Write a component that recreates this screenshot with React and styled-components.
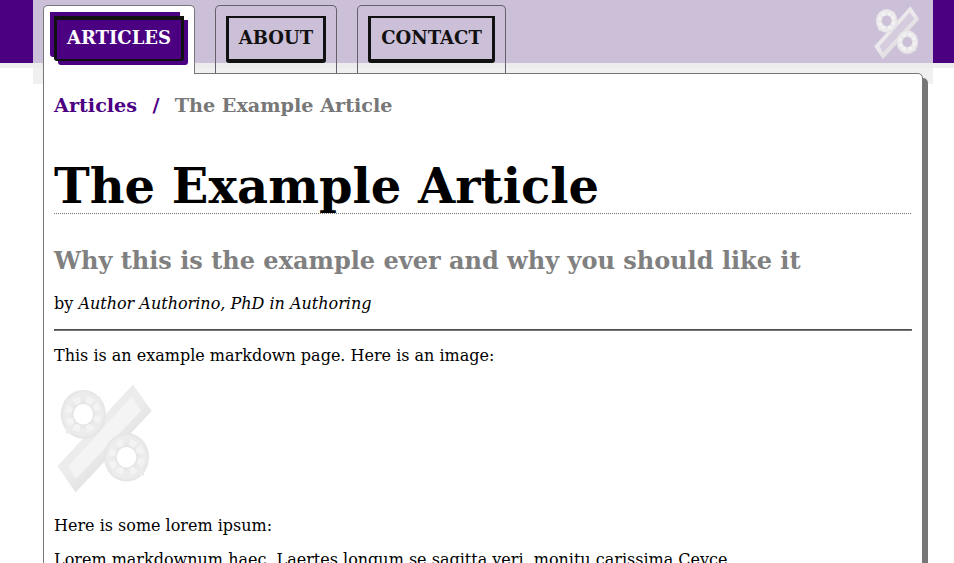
import React from "react";
import styled, { createGlobalStyle } from "styled-components";

const GlobalStyle = createGlobalStyle`
  *, *::before, *::after { box-sizing: border-box; }
  html, body { margin: 0; }
  body {
    height: 100vh;
    overflow: hidden;
    background: #fff;
    color: #000;
    font: 16px/19px "DejaVu Serif", serif;
  }
`;

const Page = styled.div`
  height: 563px;
  overflow: hidden;
  background: linear-gradient(#4b0082 0 63px, #eee 63px 68px, #fff 68px);
`;

const Column = styled.div`
  width: 900px;
  margin: 0 21px 0 33px;
  padding: 5px 10px 0;
  background: linear-gradient(#ccbfd8 0 63px, #ececec 63px 68px, #f0f0f0 68px 84px, transparent 84px);
`;

const Header = styled.header`
  display: flex;
  justify-content: space-between;
  align-items: flex-start;
  height: 68px;
`;

const Tabs = styled.nav`
  display: flex;
  gap: 20px;
`;

const Tab = styled.div`
  position: relative;
  height: ${(p) => (p.$active ? 69 : 68)}px;
  padding: 10px 10px 0;
  border: 1px solid ${(p) => (p.$active ? "#777" : "#665f6c")};
  border-bottom: 0;
  border-radius: 5px 5px 0 0;
  background: ${(p) => (p.$active ? "#fff" : "transparent")};
`;

const TabLink = styled.a`
  display: block;
  width: ${(p) => p.$width}px;
  height: ${(p) => (p.$active ? 45 : 47)}px;
  padding-top: ${(p) => (p.$active ? 7 : 9)}px;
  border: 3px solid #111;
  border-width: ${(p) => (p.$active ? "4px 3px 2px" : "2px 3px 4px")};
  border-radius: 0 0 3px 3px;
  background: ${(p) => (p.$active ? "#4b0082" : "transparent")};
  box-shadow: ${(p) => (p.$active ? "4px 4px #4b0082, -4px -4px #4b0082" : "none")};
  color: ${(p) => (p.$active ? "#fff" : "#111")};
  font-size: 18px;
  font-weight: bold;
  line-height: 21px;
  text-align: center;
  white-space: nowrap;
`;

const Card = styled.main`
  height: 520px;
  padding: 21px 10px 0;
  border: 1px solid #777;
  border-radius: 0 5px 0 0;
  background: #fff;
  box-shadow: 5px 5px #777;
`;

const Crumbs = styled.div`
  display: flex;
  gap: 15.25px;
  height: 22px;
  color: #4b0082;
  font-size: 19.2px;
  font-weight: bold;
  line-height: 22px;
`;

const Current = styled.span`
  color: #777;
`;

const Title = styled.h1`
  height: 57px;
  margin: 40px 1px 0 0;
  border-bottom: 1px dotted #777;
  font-size: 48px;
  line-height: 58px;
`;

const Subtitle = styled.h2`
  margin: 33px 0 0;
  color: #808080;
  font-size: 24px;
  line-height: 28px;
`;

const Paragraph = styled.p`
  margin: ${(p) => p.$gap ?? 15}px 0 0;
`;

const Rule = styled.hr`
  height: 2px;
  margin: 16px 0 0;
  border: 1px solid;
  border-color: #4d4d4d #777 #777 #4d4d4d;
`;

const Mark = styled.svg`
  display: block;
  flex: none;
  width: ${(p) => p.$w}px;
  height: ${(p) => p.$h}px;
  margin: ${(p) => p.$margin};
`;

const palettes = {
  header: { edge: "#e0dde2", rim: "#ebe9ec", shine: "#f4f3f4", face: "#d6ccde" },
  article: { edge: "#e4e4e4", rim: "#ececec", shine: "#f3f3f3", face: "#f4f4f4" },
};

const rings = [
  { x: 26.3, y: 30.3 },
  { x: 69.5, y: 73.2 },
];

const glints = [-28, 18, 65, 115, 152, 198, 245, 295];

function Percent({ id, w, h, margin }) {
  const { edge, rim, shine, face } = palettes[id];
  return (
    <Mark $w={w} $h={h} $margin={margin} viewBox="0 0 96 110" preserveAspectRatio="none">
      <defs>
        <linearGradient id={`${id}-bar`} gradientUnits="userSpaceOnUse" x1="33" y1="36" x2="63" y2="66">
          <stop offset="0" stopColor={rim} />
          <stop offset="0.5" stopColor={rim} />
          <stop offset="1" stopColor={edge} />
        </linearGradient>
        <radialGradient id={`${id}-ring`} cx="0.5" cy="0.5" r="0.5">
          <stop offset="0.42" stopColor={edge} />
          <stop offset="0.62" stopColor={rim} />
          <stop offset="0.85" stopColor={rim} />
          <stop offset="1" stopColor={edge} />
        </radialGradient>
        <filter id={`${id}-soft`} x="-20%" y="-20%" width="140%" height="140%">
          <feGaussianBlur stdDeviation="0.7" />
        </filter>
        <mask id={`${id}-holes`}>
          <rect width="96" height="110" fill="#fff" />
          {rings.map(({ x, y }) => (
            <ellipse key={x} cx={x} cy={y} rx="9.8" ry="10.2" fill="#000" />
          ))}
        </mask>
      </defs>
      <g mask={`url(#${id}-holes)`}>
        <path d="M76 .5 94.7 27 18.5 108.5.5 82Z" fill={`url(#${id}-bar)`} />
        <path d="M74.7 12.7 84 26.7 18.7 95 11.3 82Z" fill={face} filter={`url(#${id}-soft)`} />
        {rings.map(({ x, y }) => (
          <g key={x}>
            <ellipse cx={x} cy={y} rx="22.5" ry="24.4" fill={`url(#${id}-ring)`} />
            <g fill={shine} filter={`url(#${id}-soft)`}>
              {glints.map((a) => (
                <path key={a} transform={`translate(${x} ${y}) rotate(${a})`} d="M11.5 -2.5 18 -4 18 4 11.5 2.5Z" />
              ))}
            </g>
          </g>
        ))}
        <path d="M37 10 43.8 13 42 18ZM9 42 8.6 49 16 51ZM81 91 87.4 92 86.5 86Z" fill={rim} />
      </g>
    </Mark>
  );
}

const tabs = [
  { label: "ARTICLES", width: 130, active: true },
  { label: "ABOUT", width: 100 },
  { label: "CONTACT", width: 127 },
];

export default function App() {
  return (
    <>
      <GlobalStyle />
      <Page>
        <Column>
          <Header>
            <Tabs>
              {tabs.map((t) => (
                <Tab key={t.label} $active={t.active}>
                  <TabLink $active={t.active} $width={t.width}>{t.label}</TabLink>
                </Tab>
              ))}
            </Tabs>
            <Percent id="header" w={46} h={54} margin="1px 3px 0 0" />
          </Header>
          <Card>
            <Crumbs>
              <span>Articles</span>
              <span>/</span>
              <Current>The Example Article</Current>
            </Crumbs>
            <Title>The Example Article</Title>
            <Subtitle>Why this is the example ever and why you should like it</Subtitle>
            <Paragraph $gap={19}>by <em>Author Authorino, PhD in Authoring</em></Paragraph>
            <Rule />
            <Paragraph>This is an example markdown page. Here is an image:</Paragraph>
            <Percent id="article" w={96} h={110} margin="19px 0 0 3px" />
            <Paragraph $gap={22}>Here is some lorem ipsum:</Paragraph>
            <Paragraph>Lorem markdownum haec. Laertes longum se sagitta veri, monitu carissima Ceyce.</Paragraph>
          </Card>
        </Column>
      </Page>
    </>
  );
}
